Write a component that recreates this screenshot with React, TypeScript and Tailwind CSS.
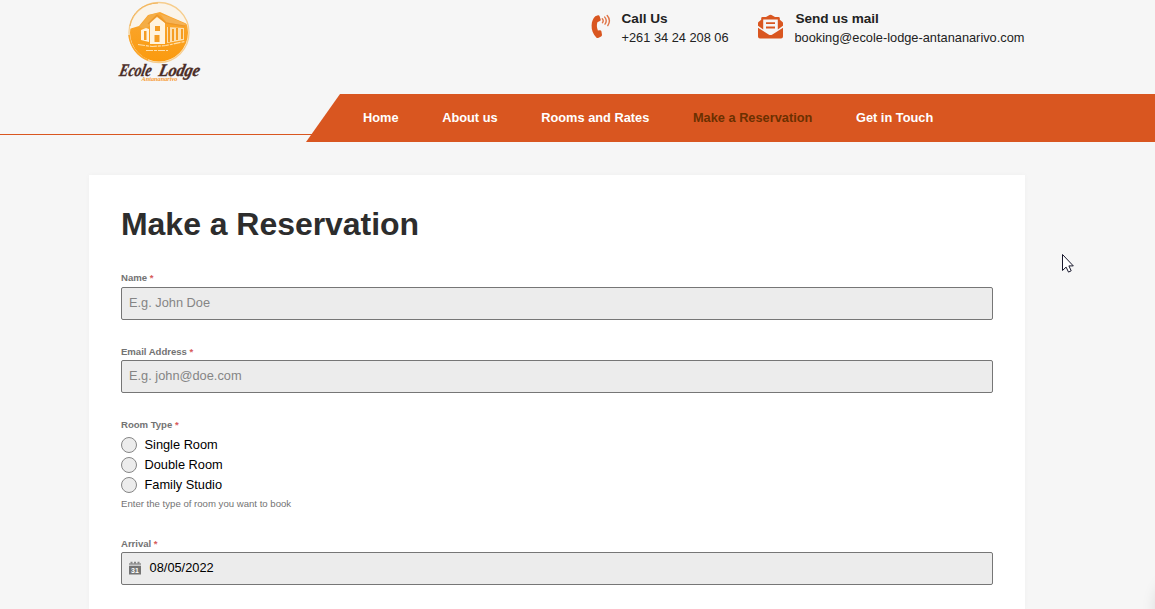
import type { ReactNode } from "react";

const rooms = ["Single Room", "Double Room", "Family Studio"];

function Logo() {
  return (
    <svg className="block h-[86px] w-[90px]" viewBox="0 0 90 86" role="img" aria-label="Ecole Lodge">
      <defs>
        <linearGradient id="ground" x1="0" y1="0" x2="0" y2="1">
          <stop offset="0" stopColor="#f9a733" />
          <stop offset="1" stopColor="#fb9a0c" />
        </linearGradient>
        <clipPath id="disc">
          <circle cx="44" cy="32.5" r="29" />
        </clipPath>
      </defs>
      <circle cx="44" cy="32.5" r="30" fill="#faf4ea" stroke="#f6cd8d" strokeWidth="1.3" />
      <path d="M15 26C17 12 28 3.500 43 3" fill="none" stroke="#f3b55c" strokeWidth="1" />
      <path d="M14 35a30 30 0 0 0 19 25" fill="none" stroke="#fba52a" strokeWidth="1.500" />
      <g clipPath="url(#disc)">
        <path d="M14 29 24 26 33 15 45 12 56 17 70 23 75 26V64H13z" fill="url(#ground)" />
        <path d="m24 27 10-12 9-2-7 12-6 4z" fill="#f4ad45" />
        <path d="m42 13 12 4 17 7-2 2-18-4-5-7z" fill="#f5b254" />
        <path d="m26 30 5-2 3 1v13l-8-2zM35 23l7-6 8 6v21H35z" fill="#fff3dd" />
        <path d="m52 27 17 1v12l-17 3z" fill="#fde0b0" />
        <path d="m33 24 9-9 9 8 19 3" fill="none" stroke="#ea962b" strokeWidth="1.200" />
        <path d="M29 31h2.500v9H29zM40 26h5v5h-5zM39.500 35h5v7h-5zM53 27h2v15h-2zM57 29h2v12h-2zM61 28h2v12h-2zM66 29h2v10h-2z" fill="#f59d22" />
        <path d="m23 44.500 14 2 14-1 19-4M31 50.500h22" fill="none" stroke="#ffdfa9" strokeWidth="1.200" strokeDasharray="7 1 3 1" />
      </g>
      <g fill="#4b2d26" stroke="#4b2d26" strokeWidth="0.4" transform="translate(0 75.500) skewX(-12)" className="font-['Liberation_Serif',serif] text-[17.5px] font-bold italic">
        <text x="3.500" y="0" textLength="32" lengthAdjust="spacingAndGlyphs">Ecole</text>
        <text x="43" y="0" textLength="41" lengthAdjust="spacingAndGlyphs">Lodge</text>
      </g>
      <text x="26.500" y="81.300" textLength="36" lengthAdjust="spacingAndGlyphs" fill="#f69a31" className="font-['Liberation_Serif',serif] text-[6px] font-bold italic">Antananarivo</text>
    </svg>
  );
}

function PhoneIcon() {
  return (
    <svg className="h-[25px] w-5" viewBox="0 0 20 25" fill="none">
      <path d="M4.300 2.300 7 1.300q1.200-.3 1.600.9l1.100 3.200q.3 1.200-.8 1.700L6.400 8.300c-.8 2.700-.7 5.400.5 8.100l2-.2q1.200 0 1.500 1.100l.6 3.500q.1 1.200-.9 1.700l-3 1.500q-1 .4-1.800-.5C1.900 20 .4 16 .6 11.300.8 7.500 2 4.500 4.300 2.300Z" fill="#d95620" />
      <path d="M11.300 4.700q1.700 1.900.2 4M13.700 3.100q2.900 3.200.3 7M16.200 1.500q4.100 4.700.6 10.100" stroke="#e07446" strokeWidth="1.400" strokeLinecap="round" />
    </svg>
  );
}

function EnvelopeIcon() {
  return (
    <svg className="size-[25px]" viewBox="0 0 25 25" fill="#d95620">
      <path d="M8 2.900 11.500 1q1-.6 2 0L17 2.900h3.500q1.300 0 1.300 1.300v1.600l2.700 2.100q.5.400.5 1v2.800l-5.200 3.700V5.400H5.200v10L0 11.700V8.900q0-.6.500-1l2.700-2.100V4.200q0-1.300 1.300-1.300z" />
      <path d="M8 8.200h9V10H8zM8 12.500h9v1.900H8z" />
      <path d="m0 13.800 10.600 6.700q1.900 1.200 3.800 0L25 13.800v8.700q0 2-2 2H2q-2 0-2-2z" />
    </svg>
  );
}

function CalendarIcon() {
  return (
    <svg className="-mt-px h-[14px] w-3" viewBox="0 0 12 14">
      <path d="M0 2h12v2.500H0z" fill="#a8a8a8" />
      <path d="M1.500.8h2v2h-2zM5 .8h2v2H5zM8.500.8h2v2h-2z" fill="#858585" />
      <path d="M0 5h12v8.500H0z" fill="#747474" />
      <text x="6" y="12" textAnchor="middle" fill="#fff" className="font-['Liberation_Sans',sans-serif] text-[7px] font-bold">31</text>
    </svg>
  );
}

function Label({ children }: { children: ReactNode }) {
  return (
    <div className="h-[11px] text-[9.6px] leading-[11px] font-bold tracking-[-0.03px] text-[#737373]">
      {children} <span className="text-[#d75b5b]">*</span>
    </div>
  );
}

const inputClass =
  "block h-[33px] w-full rounded-[2px] border border-[#767676] bg-[#ececec] px-[7px] pb-[3px] text-[12.8px] text-black outline-none placeholder:text-[#858585] placeholder:opacity-100";

export default function App() {
  return (
    <div className="relative h-[609px] overflow-hidden bg-[#f6f6f6] font-['Liberation_Sans',Arial,sans-serif] text-[#222]">
      <header className="flex h-[94px] items-start">
        <div className="ml-[115px] w-[476px] shrink-0">
          <Logo />
        </div>
        <div className="flex w-[167px] shrink-0 pt-[9px]">
          <div className="w-[30.5px] pt-[5px]">
            <PhoneIcon />
          </div>
          <div className="whitespace-nowrap">
            <div className="text-[13.6px] leading-[19px] font-bold">Call Us</div>
            <div className="text-[12.8px] leading-[19px]">+261 34 24 208 06</div>
          </div>
        </div>
        <div className="flex pt-[9px]">
          <div className="w-[36.5px] pt-[5px]">
            <EnvelopeIcon />
          </div>
          <div className="whitespace-nowrap">
            <div className="pl-px text-[13.6px] leading-[19px] font-bold tracking-[-0.06px]">Send us mail</div>
            <div className="text-[12.8px] leading-[19px]">booking@ecole-lodge-antananarivo.com</div>
          </div>
        </div>
      </header>

      <div className="flex h-12">
        <div className="-mr-1.5 h-[41px] w-[312px] shrink-0 border-b border-[#d95620]" />
        <nav className="flex flex-1 items-center gap-[43.6px] bg-[#d95620] pl-[57px] text-[12.8px] font-bold whitespace-nowrap text-white [clip-path:polygon(34px_0,100%_0,100%_100%,0_100%)]">
          <a>Home</a>
          <a>About us</a>
          <a>Rooms and Rates</a>
          <a className="text-[#6b3000]">Make a Reservation</a>
          <a>Get in Touch</a>
        </nav>
      </div>

      <main className="mt-[33px] ml-[89px] h-[434px] w-[936px] bg-white px-8 pt-[29px] shadow-[0_0_5px_rgba(0,0,0,0.03)]">
        <h1 className="h-10 text-[32px] leading-10 font-bold tracking-[-0.04px] text-[#2d2d2d]">Make a Reservation</h1>
        <form className="pt-7">
          <Label>Name</Label>
          <div className="mt-1 h-[33px]">
            <input className={inputClass} placeholder="E.g. John Doe" />
          </div>
          <div className="mt-[26px]">
            <Label>Email Address</Label>
            <input className={`${inputClass} mt-[3px]`} placeholder="E.g. john@doe.com" />
          </div>
          <div className="mt-[26px]">
            <Label>Room Type</Label>
            <div className="mt-[5px] text-[12.8px] text-black">
              {rooms.map((room) => (
                <label key={room} className="flex h-5 items-center gap-[7.5px]">
                  <input type="radio" name="room" className="size-4 appearance-none rounded-full border border-[#858585] bg-[#ececec]" />
                  <span className="-mt-px leading-[18px]">{room}</span>
                </label>
              ))}
            </div>
            <p className="mt-[3px] text-[9.6px] leading-[12px] text-[#737373]">Enter the type of room you want to book</p>
          </div>
          <div className="mt-[28px]">
            <Label>Arrival</Label>
            <div className="mt-[3px] flex h-[33px] items-center gap-[8.6px] rounded-[2px] border border-[#767676] bg-[#ececec] pb-px pl-[7px] text-[12.8px] text-black">
              <CalendarIcon />
              <span className="-mt-px leading-[18px]">08/05/2022</span>
            </div>
          </div>
        </form>
      </main>

      <div className="absolute top-[575px] left-[1157px] size-16 rounded-full shadow-[0_0_16px_rgba(0,0,0,0.15)]" />
      <svg className="absolute top-[253px] left-[1061px] h-[21px] w-[14px]" viewBox="0 0 14 21">
        <path d="M1.500 1.500v16l3.600-3.400 2.400 5 2.700-1.300-2.300-4.900h4.400z" fill="#fff" stroke="#17172b" strokeWidth="1" />
      </svg>
    </div>
  );
}
